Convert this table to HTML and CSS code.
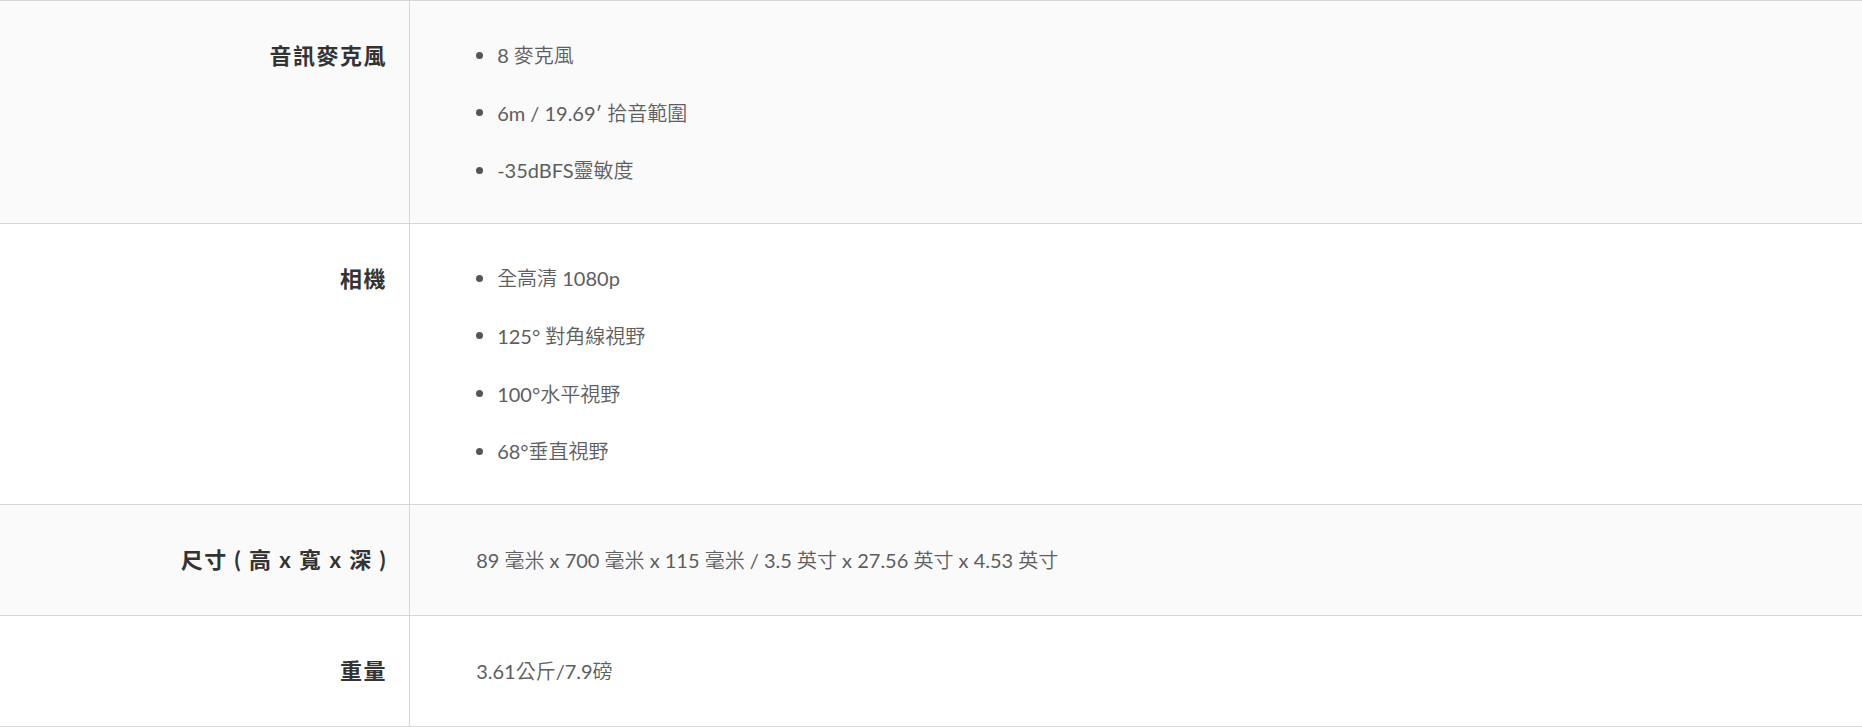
FILE: index.html
```html
<!DOCTYPE html>
<html lang="zh-Hant">
<head>
<meta charset="utf-8">
<title>規格</title>
<link rel="stylesheet" href="styles.css">
</head>
<body>
<table class="specs">
  <tbody>
    <tr class="row row-shaded">
      <th class="label">音訊麥克風</th>
      <td class="value value-list">
        <ul class="items">
          <li class="item">8 麥克風</li>
          <li class="item">6m / 19.69′ 拾音範圍</li>
          <li class="item">-35dBFS靈敏度</li>
        </ul>
      </td>
    </tr>
    <tr class="row">
      <th class="label">相機</th>
      <td class="value value-list">
        <ul class="items">
          <li class="item">全高清 1080p</li>
          <li class="item">125° 對角線視野</li>
          <li class="item">100°水平視野</li>
          <li class="item">68°垂直視野</li>
        </ul>
      </td>
    </tr>
    <tr class="row row-shaded">
      <th class="label">尺寸 ( 高 x 寬 x 深 )</th>
      <td class="value">89 毫米 x 700 毫米 x 115 毫米 / 3.5 英寸 x 27.56 英寸 x 4.53 英寸</td>
    </tr>
    <tr class="row">
      <th class="label">重量</th>
      <td class="value">3.61公斤/7.9磅</td>
    </tr>
  </tbody>
</table>
</body>
</html>
```

FILE: styles.css
```css
html, body {
  margin: 0;
  padding: 0;
  background: #ffffff;
}

body {
  font-family: "Lato", "Noto Sans CJK TC", sans-serif;
}

.specs {
  width: 100%;
  border-collapse: collapse;
  border-top: 1px solid #d6d6d6;
}

.row {
  border-bottom: 1px solid #d6d6d6;
}

.row-shaded {
  background: #fafafa;
}

.label {
  width: 22%;
  box-sizing: border-box;
  padding: 40px 22px 40px 0;
  text-align: right;
  vertical-align: top;
  font-weight: 700;
  font-size: 22px;
  letter-spacing: 1.5px;
  line-height: 30px;
  color: #333333;
  border-right: 1px solid #d6d6d6;
}

.value {
  padding: 40px 20px 40px 66px;
  vertical-align: top;
  font-family: "Lato", "Noto Sans CJK TC DemiLight", "Noto Sans CJK TC", sans-serif;
  font-size: 20px;
  font-weight: 400;
  line-height: 30px;
  color: #5e5e5e;
}

.value-list {
  padding-top: 39px;
  padding-bottom: 38px;
}

.items {
  list-style: none;
  margin: 0;
  padding: 0;
  display: flex;
  flex-direction: column;
  gap: 27.67px;
}

.item {
  display: flex;
  align-items: center;
  gap: 14px;
}

.item::before {
  content: "";
  flex: none;
  width: 7px;
  height: 7px;
  border-radius: 50%;
  background: #555555;
}
```
